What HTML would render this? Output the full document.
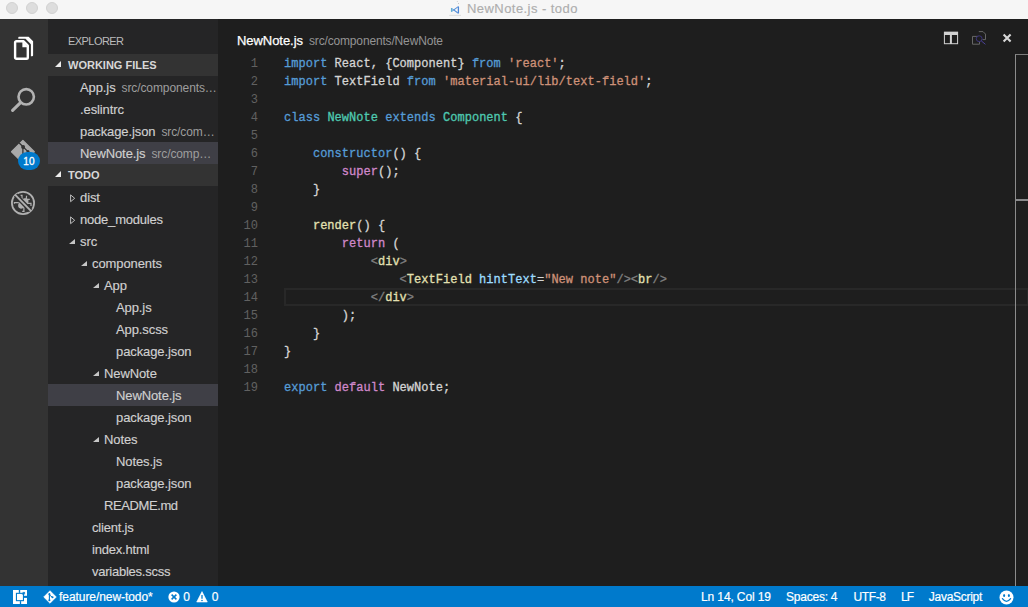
<!DOCTYPE html>
<html>
<head>
<meta charset="utf-8">
<title>NewNote.js - todo</title>
<style>
*{box-sizing:border-box;margin:0;padding:0}
html,body{width:1028px;height:607px;overflow:hidden;background:#1e1e1e}
body{position:relative;font-family:"Liberation Sans",sans-serif;font-size:13px;color:#ccc}
#titlebar{position:absolute;left:0;top:0;width:1028px;height:19px;background:#f6f6f6}
.tl{position:absolute;top:2px;width:12px;height:12px;border-radius:50%;background:#dddddd;border:1px solid #d2d2d2}
#title{position:absolute;left:467px;top:0;height:18px;line-height:17px;font-size:13px;color:#adadad;-webkit-text-stroke:.15px;letter-spacing:.44px;white-space:nowrap}
#activity{position:absolute;left:0;top:19px;width:48px;height:567px;background:#333333}
#sidebar{position:absolute;left:48px;top:19px;width:170px;height:567px;background:#252526;overflow:hidden}
#editor{position:absolute;left:218px;top:19px;width:810px;height:567px;background:#1e1e1e}
#status{position:absolute;left:0;top:586px;width:1028px;height:21px;background:#007acc;color:#fff;font-size:12px}
.st{position:absolute;top:0;line-height:22px;font-size:12px;color:#fff;white-space:nowrap;-webkit-text-stroke:.2px}
.hdr{position:absolute;left:0;width:170px;height:22px;background:#333333;color:#d8d8d8;font-weight:bold;font-size:11px;line-height:22px;white-space:nowrap}
.hdr span{position:absolute;left:20px}
.row{position:absolute;left:0;width:170px;height:22px;line-height:24px;font-size:13px;color:#d0d0d0;white-space:nowrap;letter-spacing:-.1px;-webkit-text-stroke:.15px}
.row.sel{background:#3f3f46}
.row .d{font-size:12px;color:#9e9e9e;margin-left:6px;-webkit-text-stroke:0}
.ha{position:absolute;left:6.9px;top:6.8px;width:0;height:0;border-left:6.3px solid transparent;border-bottom:6.3px solid #ececec}
.te{position:absolute;top:9.3px;width:0;height:0;border-left:6px solid transparent;border-bottom:5.8px solid #c6c6c6}
.tc{position:absolute;top:7.6px;width:6px;height:9px}
.code{position:absolute;left:66px;font-family:"Liberation Mono",monospace;font-size:12px;line-height:18px;white-space:pre;color:#d4d4d4;height:18px;-webkit-text-stroke:.3px;letter-spacing:.024px}
.ln{position:absolute;left:0;width:40px;text-align:right;font-family:"Liberation Mono",monospace;font-size:12px;line-height:18px;color:#616161;height:18px}
.k{color:#569cd6}.s{color:#ce9178}.t{color:#4ec9b0}.p{color:#d088ca}.g{color:#808080}.a{color:#9cdcfe}.y{color:#e3e0b2}
</style>
</head>
<body>
<div id="titlebar">
<div class="tl" style="left:6px"></div><div class="tl" style="left:26px"></div><div class="tl" style="left:46px"></div>
<svg width="16" height="18" viewBox="446 0 16 18" style="position:absolute;left:446px;top:0">
<path d="M449.2 15.4 H461" stroke="#dadada" stroke-width=".9"/>
<circle cx="457.3" cy="1.5" r=".5" fill="#c8c8c8"/><circle cx="458.5" cy="3.5" r=".55" fill="#bdbdbd"/>
<path d="M458.4 6.4 V13.5" stroke="#4c86d6" stroke-width="1.3"/>
<path d="M457.9 6.9 L453.8 9.95 L457.9 13" stroke="#5a92dc" stroke-width="1.05" fill="none"/>
<path d="M451.6 8 V11.9" stroke="#62b0d2" stroke-width="1.3"/>
<path d="M451.9 8.7 L454.8 10.7 M451.9 11.2 L454.8 9.2" stroke="#5a98da" stroke-width=".9"/>
</svg>
<div id="title">NewNote.js - todo</div>
</div>
<div id="activity">
<svg width="48" height="567" viewBox="0 19 48 567" style="position:absolute;left:0;top:0">
<!-- explorer -->
<g fill="none" stroke="#ffffff" stroke-width="2.2" stroke-linejoin="round">
<path d="M19 36.8 H28.6 L33.1 41.3 V55.2 a1 1 0 0 1 -1 1 H18.3 V37.5 a.7 .7 0 0 1 .7 -.7z" fill="#fff" stroke="none"/>
<path d="M17 38.7 H25.5 L30.9 44.2 V58 H17 Z" fill="#333" stroke="none"/>
<path d="M16.4 41.3 H23.6 L27.8 45.5 V57.5 a1.3 1.3 0 0 1 -1.3 1.3 H16.4 a1.3 1.3 0 0 1 -1.3 -1.3 V42.6 a1.3 1.3 0 0 1 1.3 -1.3z" stroke="#333" stroke-width="3.6"/>
<path d="M16.4 41.3 H23.6 L27.8 45.5 V57.5 a1.3 1.3 0 0 1 -1.3 1.3 H16.4 a1.3 1.3 0 0 1 -1.3 -1.3 V42.6 a1.3 1.3 0 0 1 1.3 -1.3z" fill="#333" stroke-width="2.4"/>
<path d="M22.4 41 V47.2 H28.4 Z" fill="#fff" stroke="none"/>
</g>
<!-- search -->
<g fill="none" stroke="#b2b2b2">
<circle cx="26.2" cy="96.8" r="7.7" stroke-width="2.6"/>
<path d="M20.3 102.8 L12.6 110.4" stroke-width="3.1" stroke-linecap="round"/>
</g>
<!-- git -->
<g>
<path d="M22.9 140.5 L34.3 151.8 L22.9 163.1 L11.5 151.8 Z" fill="#aaaaaa" stroke="#aaaaaa" stroke-width="1.2" stroke-linejoin="round"/>
<path d="M19.2 143 L28 151.6 M22.9 147 V156" stroke="#333" stroke-width="1.3" fill="none"/>
<circle cx="23.1" cy="146.9" r="2" fill="#333"/>
<circle cx="28" cy="151.6" r="1.5" fill="#333"/>
<circle cx="22.9" cy="156.5" r="1.5" fill="#333"/>
</g>
<!-- debug -->
<g fill="none" stroke="#b0b0b0">
<circle cx="23" cy="203" r="11.1" stroke-width="1.8"/>
<g stroke-width="1.2">
<ellipse cx="23.3" cy="203.4" rx="3.9" ry="6.3" fill="#b0b0b0" stroke="none" transform="rotate(45 23.3 203.4)"/>
<path d="M20.6 195.4 h1.4 v3.5 M26.6 195.8 l-.4 3.2 M29.8 199.4 h-3 M31 206 v-2.6 h-4 M24.6 211.3 h-2.4 M14.4 203.8 v-1.2 h4.4 M23.9 207.5 v3.8"/>
</g>
<path d="M15.6 195.2 L30.6 210.6" stroke="#333" stroke-width="4.6"/>
<path d="M15.2 194.8 L30.9 210.9" stroke="#b0b0b0" stroke-width="1.9"/>
</g>
</svg>
<div style="position:absolute;left:18px;top:133px;width:22px;height:18px;border-radius:9px/9px;background:#007acc;color:#fff;font-size:10px;line-height:19.6px;text-align:center;letter-spacing:.3px;-webkit-text-stroke:.3px #fff">10</div>
</div>
<div id="sidebar">
<div style="position:absolute;left:20px;top:15px;font-size:11px;color:#bbbbbb;line-height:14px;letter-spacing:-.56px">EXPLORER</div>
<div class="hdr" style="top:35px"><i class="ha"></i><span>WORKING FILES</span></div>
<div class="row" style="top:57px;padding-left:32px">App.js<span class="d">src/components…</span></div>
<div class="row" style="top:79px;padding-left:32px">.eslintrc</div>
<div class="row" style="top:101px;padding-left:32px">package.json<span class="d">src/com…</span></div>
<div class="row sel" style="top:123px;padding-left:32px">NewNote.js<span class="d">src/comp…</span></div>
<div class="hdr" style="top:145px"><i class="ha"></i><span>TODO</span></div>
<div class="row" style="top:167px;padding-left:32px"><svg class="tc" style="left:21.6px" viewBox="0 0 6 9"><path d="M0.6 0.9 L4.7 4.3 L0.6 7.7 Z" fill="none" stroke="#bdbdbd" stroke-width="1"/></svg>dist</div>
<div class="row" style="top:189px;padding-left:32px;letter-spacing:-0.2px"><svg class="tc" style="left:21.6px" viewBox="0 0 6 9"><path d="M0.6 0.9 L4.7 4.3 L0.6 7.7 Z" fill="none" stroke="#bdbdbd" stroke-width="1"/></svg>node_modules</div>
<div class="row" style="top:211px;padding-left:32px"><i class="te" style="left:21.3px"></i>src</div>
<div class="row" style="top:233px;padding-left:44px"><i class="te" style="left:33.3px"></i>components</div>
<div class="row" style="top:255px;padding-left:56px"><i class="te" style="left:45.3px"></i>App</div>
<div class="row" style="top:277px;padding-left:68px">App.js</div>
<div class="row" style="top:299px;padding-left:68px">App.scss</div>
<div class="row" style="top:321px;padding-left:68px">package.json</div>
<div class="row" style="top:343px;padding-left:56px"><i class="te" style="left:45.3px"></i>NewNote</div>
<div class="row sel" style="top:365px;padding-left:68px">NewNote.js</div>
<div class="row" style="top:387px;padding-left:68px">package.json</div>
<div class="row" style="top:409px;padding-left:56px"><i class="te" style="left:45.3px"></i>Notes</div>
<div class="row" style="top:431px;padding-left:68px">Notes.js</div>
<div class="row" style="top:453px;padding-left:68px">package.json</div>
<div class="row" style="top:475px;padding-left:56px;letter-spacing:-0.4px">README.md</div>
<div class="row" style="top:497px;padding-left:44px;letter-spacing:-0.2px">client.js</div>
<div class="row" style="top:519px;padding-left:44px;letter-spacing:-0.2px">index.html</div>
<div class="row" style="top:541px;padding-left:44px;letter-spacing:-0.25px">variables.scss</div>
</div>
<div id="editor">
<div style="position:absolute;left:19px;top:14px;font-size:13px;line-height:16px;color:#fff;white-space:nowrap;letter-spacing:-.05px;-webkit-text-stroke:.25px">NewNote.js<span style="font-size:12px;color:#949494;margin-left:6px;letter-spacing:-.16px;-webkit-text-stroke:0">src/components/NewNote</span></div>
<svg width="90" height="20" viewBox="0 0 90 20" style="position:absolute;left:720px;top:9px">
<!-- origin = editor (720,9) => page (938,28) -->
<g>
<rect x="6.4" y="4.3" width="13.2" height="11.4" fill="none" stroke="#d2d2d2" stroke-width="1"/>
<rect x="6" y="3.8" width="14" height="3.2" fill="#d2d2d2"/>
<rect x="11.9" y="6" width="2" height="10" fill="#d2d2d2"/>
</g>
<g fill="none" stroke="#666666" stroke-width="1">
<path d="M40.8 3.6 H45 L47.5 6.1 V11.6 H44.5"/>
<path d="M41 8.4 H34.5 V16.2 H41.5 V13.5"/>
<circle cx="41.2" cy="10.7" r="2.9" stroke="#3d357c" stroke-width="1" fill="#1e1e1e"/>
<path d="M43.3 12.9 L47.4 16.3" stroke="#4c429a" stroke-width="1"/>
</g>
<path d="M65.6 6.6 L72.6 13.6 M72.6 6.6 L65.6 13.6" stroke="#d8d8d8" stroke-width="2.1" fill="none"/>
</svg>
<div id="lines" style="position:absolute;left:0;top:36px;width:810px;height:400px">
<div id="curline" style="position:absolute;left:66px;top:233px;width:745px;height:18px;border:2px solid #282828"></div>
<div class="ln" style="top:0px">1</div><div class="code" style="top:0px"><span class="k">import</span> React, {Component} <span class="k">from</span> <span class="s">'react'</span>;</div>
<div class="ln" style="top:18px">2</div><div class="code" style="top:18px"><span class="k">import</span> TextField <span class="k">from</span> <span class="s">'material-ui/lib/text-field'</span>;</div>
<div class="ln" style="top:36px">3</div><div class="code" style="top:36px"></div>
<div class="ln" style="top:54px">4</div><div class="code" style="top:54px"><span class="k">class</span> <span class="t">NewNote</span> <span class="k">extends</span> <span class="t">Component</span> {</div>
<div class="ln" style="top:72px">5</div><div class="code" style="top:72px"></div>
<div class="ln" style="top:90px">6</div><div class="code" style="top:90px">    <span class="k">constructor</span>() {</div>
<div class="ln" style="top:108px">7</div><div class="code" style="top:108px">        <span class="p">super</span>();</div>
<div class="ln" style="top:126px">8</div><div class="code" style="top:126px">    }</div>
<div class="ln" style="top:144px">9</div><div class="code" style="top:144px"></div>
<div class="ln" style="top:162px">10</div><div class="code" style="top:162px">    <span class="y">render</span>() {</div>
<div class="ln" style="top:180px">11</div><div class="code" style="top:180px">        <span class="p">return</span> (</div>
<div class="ln" style="top:198px">12</div><div class="code" style="top:198px">            <span class="g">&lt;</span><span class="y">div</span><span class="g">&gt;</span></div>
<div class="ln" style="top:216px">13</div><div class="code" style="top:216px">                <span class="g">&lt;</span><span class="y">TextField</span> <span class="a">hintText</span>=<span class="s">"New note"</span><span class="g">/&gt;&lt;</span><span class="y">br</span><span class="g">/&gt;</span></div>
<div class="ln" style="top:234px">14</div><div class="code" style="top:234px">            <span class="g">&lt;/</span><span class="y">div</span><span class="g">&gt;</span></div>
<div class="ln" style="top:252px">15</div><div class="code" style="top:252px">        );</div>
<div class="ln" style="top:270px">16</div><div class="code" style="top:270px">    }</div>
<div class="ln" style="top:288px">17</div><div class="code" style="top:288px">}</div>
<div class="ln" style="top:306px">18</div><div class="code" style="top:306px"></div>
<div class="ln" style="top:324px">19</div><div class="code" style="top:324px"><span class="k">export</span> <span class="p">default</span> NewNote;</div>
</div>
<div id="ruler" style="position:absolute;left:797px;top:35px;width:13px;height:532px;border-left:1px solid #8c8c8c;border-top:1px solid #7c7c7c"></div>
<div style="position:absolute;left:798px;top:180px;width:12px;height:2px;background:#8a8a8c"></div>
</div>
<div id="status">
<svg width="14" height="14" viewBox="0 0 14 14" style="position:absolute;left:13px;top:4px">
<rect width="14" height="14" fill="#fff"/>
<rect x="3.45" y="3.35" width="7" height="7.3" fill="none" stroke="#007acc" stroke-width="1.1"/>
<rect x="5.8" y="0" width="1.4" height="2.9" fill="#007acc"/>
<rect x="6.85" y="11.1" width="1.3" height="2.9" fill="#007acc"/>
<rect x="10.9" y="5.8" width="3.1" height="2.1" fill="#007acc"/>
<path d="M9.3 4.6 L11.4 2.5 M9.6 2.4 H11.6 V4.4" stroke="#007acc" stroke-width=".9" fill="none"/>
</svg>
<svg width="14" height="14" viewBox="0 0 14 14" style="position:absolute;left:42.5px;top:4.4px">
<path d="M7 .7 L13.3 7 L7 13.3 L.7 7 Z" fill="#fff" stroke="#fff" stroke-width=".6" stroke-linejoin="round"/>
<path d="M6.4 3.2 V10.6" stroke="#007acc" stroke-width="1.1"/>
<path d="M6.6 5 L9.4 7.3" stroke="#007acc" stroke-width="1"/>
<circle cx="6.4" cy="4.2" r="1.05" fill="#007acc"/><circle cx="6.4" cy="10.2" r="1.05" fill="#007acc"/><circle cx="9.5" cy="7.3" r="1.05" fill="#007acc"/>
</svg>
<span class="st" style="left:59px;letter-spacing:-.06px">feature/new-todo*</span>
<svg width="12" height="12" viewBox="0 0 12 12" style="position:absolute;left:167.5px;top:5.4px">
<circle cx="6" cy="6" r="5.6" fill="#fff"/>
<path d="M3.6 3.6 L8.4 8.4 M8.4 3.6 L3.6 8.4" stroke="#007acc" stroke-width="1.5"/>
</svg>
<span class="st" style="left:183.3px">0</span>
<svg width="12" height="12" viewBox="0 0 12 12" style="position:absolute;left:195.8px;top:5.4px">
<path d="M6 .6 L11.3 11 H.7 Z" fill="#fff" stroke="#fff" stroke-width=".6" stroke-linejoin="round"/>
<path d="M6 4 V7.8" stroke="#007acc" stroke-width="1.3"/><circle cx="6" cy="9.5" r=".8" fill="#007acc"/>
</svg>
<span class="st" style="left:211.7px">0</span>
<span class="st" style="left:701px;letter-spacing:-.12px">Ln 14, Col 19</span>
<span class="st" style="left:786px;letter-spacing:-.23px">Spaces: 4</span>
<span class="st" style="left:853.5px;letter-spacing:-.4px">UTF-8</span>
<span class="st" style="left:901px;letter-spacing:-.8px">LF</span>
<span class="st" style="left:928.8px;letter-spacing:-.28px">JavaScript</span>
<svg width="15" height="15" viewBox="0 0 15 15" style="position:absolute;left:998.5px;top:3.6px">
<circle cx="7.5" cy="7.5" r="7" fill="#fff"/>
<ellipse cx="5.1" cy="5.6" rx="1" ry="1.5" fill="#007acc"/><ellipse cx="9.9" cy="5.6" rx="1" ry="1.5" fill="#007acc"/>
<path d="M3.4 8.6 Q7.5 14 11.6 8.6" fill="none" stroke="#007acc" stroke-width="1.2" stroke-linecap="round"/>
</svg>
</div>
</body>
</html>
